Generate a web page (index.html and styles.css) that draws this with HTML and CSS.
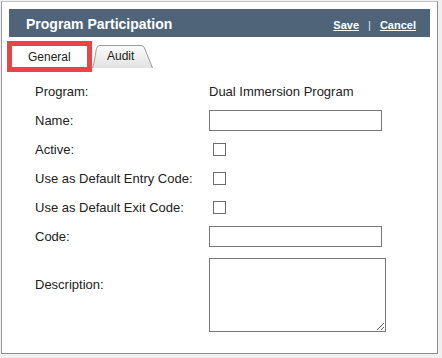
FILE: index.html
```html
<!DOCTYPE html>
<html lang="en">
<head>
  <meta charset="UTF-8" />
  <title>Program Participation</title>
  <link rel="stylesheet" href="styles.css">
</head>
<body>
  <div class="panel">
    <div class="header">
      <span class="title">Program Participation</span>
      <span class="actions"><a href="#">Save</a><span class="sep">|</span><a href="#">Cancel</a></span>
    </div>

    <div class="tabs">
      <div class="tab active">General</div>
      <div class="tab audit">
        <svg class="tab-shape" width="62" height="23" viewBox="0 0 62 23">
          <defs>
            <linearGradient id="tabfill" x1="0" y1="0" x2="0" y2="1">
              <stop offset="0" stop-color="#fbfbfb"/>
              <stop offset="1" stop-color="#e2e2e2"/>
            </linearGradient>
          </defs>
          <path d="M0.5 23 C2.5 18 3.5 8 4.5 3.5 Q5.2 0.5 8 0.5 L49 0.5 Q51.5 0.5 52.5 3 L60.5 23" fill="url(#tabfill)" stroke="#9a9a9a"/>
        </svg>
        <span>Audit</span>
      </div>
    </div>

    <div class="form">
      <div class="label">Program:</div>
      <div class="value">Dual Immersion Program</div>

      <div class="label">Name:</div>
      <div class="value"><input type="text" class="text"></div>

      <div class="label">Active:</div>
      <div class="value"><input type="checkbox"></div>

      <div class="label">Use as Default Entry Code:</div>
      <div class="value"><input type="checkbox"></div>

      <div class="label">Use as Default Exit Code:</div>
      <div class="value"><input type="checkbox"></div>

      <div class="label">Code:</div>
      <div class="value"><input type="text" class="text"></div>

      <div class="label top">Description:</div>
      <div class="value top"><textarea></textarea></div>
    </div>
  </div>
</body>
</html>
```

FILE: styles.css
```css
body {
  margin: 0;
  background: #f0f0f0;
  font-family: "Liberation Sans", Arial, sans-serif;
  font-size: 12px;
  color: #222;
}
.panel {
  box-sizing: border-box;
  margin: 1px 0 0 1px;
  width: 437px;
  height: 353px;
  padding: 7px;
  background: #fff;
  border: 1px solid #8c8c8c;
  border-top-color: #c4c4c4;
  border-left-color: #9a9a9a;
}
.header {
  height: 28px;
  background: #4f6479;
  color: #fff;
  display: flex;
  align-items: center;
  justify-content: space-between;
  padding: 0 14px 0 17px;
}
.title {
  font-size: 14px;
  font-weight: bold;
  padding-top: 1px;
}
.actions {
  font-size: 11px;
  font-weight: bold;
  padding-top: 4px;
}
.actions a {
  color: #fff;
}
.sep {
  color: #e8e8e8;
  margin: 0 9px;
  font-weight: normal;
}
.tabs {
  display: flex;
  margin: 4px 0 0 -2px;
  height: 31px;
}
.tab {
  font-size: 12px;
  color: #222;
}
.tab.active {
  box-sizing: border-box;
  width: 85px;
  height: 31px;
  border: 5px solid #ef4242;
  background: #fff;
  padding: 4px 0 0 16px;
}
.tab.audit {
  position: relative;
  width: 62px;
  height: 23px;
  margin-top: 4px;
}
.tab-shape {
  position: absolute;
  left: 0;
  top: 0;
}
.tab.audit span {
  position: relative;
  display: block;
  padding: 4px 0 0 15px;
}
.form {
  display: grid;
  grid-template-columns: 174px 1fr;
  grid-auto-rows: 29px;
  margin: 5px 0 0 26px;
  font-size: 13px;
}
.form .label,
.form .value {
  display: flex;
  align-items: center;
}
.form .label:first-child,
.form .label:first-child + .value {
  height: 28px;
}
.form .top {
  align-items: flex-start;
  margin-top: 7px;
}
.form .label.top {
  padding-top: 19px;
}
input.text {
  box-sizing: border-box;
  width: 173px;
  height: 21px;
  margin: 0;
  border: 1px solid #767676;
}
input[type="checkbox"] {
  appearance: none;
  box-sizing: border-box;
  width: 13px;
  height: 13px;
  margin: 0 0 0 4px;
  border: 1px solid #6d6d6d;
  background: #fff;
}
textarea {
  box-sizing: border-box;
  width: 177px;
  height: 74px;
  margin: 0;
  border: 1px solid #767676;
}
```
